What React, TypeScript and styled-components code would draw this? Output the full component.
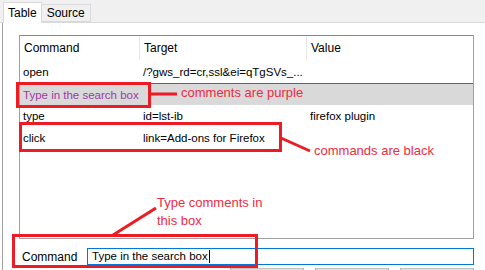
import styled, { createGlobalStyle } from "styled-components"

const GlobalStyle = createGlobalStyle`
  html, body {
    margin: 0;
    padding: 0;
    background: #ffffff;
  }
  body {
    font-family: "Liberation Sans", Arial, sans-serif;
    font-size: 12px;
    color: #000;
  }
`

const Page = styled.div`
  position: relative;
  width: 485px;
  height: 270px;
  overflow: hidden;
  background: #fff;
`

const TabStrip = styled.div`
  height: 23px;
  box-sizing: border-box;
  display: flex;
  align-items: flex-end;
  padding-left: 3px;
  background: #f0f0f0;
  border-bottom: 1px solid #d9d9d9;
`

const Tab = styled.div<{ $active?: boolean }>`
  box-sizing: border-box;
  height: ${p => (p.$active ? 21 : 18)}px;
  margin-bottom: ${p => (p.$active ? -1 : 0)}px;
  padding: 0 ${p => (p.$active ? 4 : 5)}px;
  display: flex;
  align-items: center;
  border: 1px solid #d9d9d9;
  border-bottom: ${p => (p.$active ? "none" : "1px solid #d9d9d9")};
  border-left: ${p => (p.$active ? "1px solid #d9d9d9" : "none")};
  background: ${p => (p.$active ? "#ffffff" : "#f0f0f0")};
  font-size: 12px;
`

const Panel = styled.div`
  margin-left: 2px;
  border-left: 1px solid #a0a0a0;
  padding: 12px 11px 0 16px;
  display: flex;
  flex-direction: column;
`

const Grid = styled.div`
  height: 204px;
  box-sizing: border-box;
  border: 1px solid #a0a0a0;
  border-top-color: #828790;
  font-size: 11.5px;
`

const Row = styled.div<{ $comment?: boolean; $header?: boolean }>`
  display: grid;
  grid-template-columns: 120px 167px 1fr;
  box-sizing: border-box;
  height: ${p => (p.$header ? 25 : 22)}px;
  align-items: center;
  background: ${p => (p.$comment ? "#d9d9d9" : "transparent")};
  border-top: ${p => (p.$comment ? "1px solid #2f8a2f" : "none")};
  color: ${p => (p.$comment ? "#a03aa8" : "#000")};
  font-size: ${p => (p.$header ? 12 : 11.5)}px;
`

const Cell = styled.div<{ $header?: boolean; $last?: boolean; $span?: boolean }>`
  padding-left: ${p => (p.$header ? 4 : 3)}px;
  white-space: nowrap;
  overflow: hidden;
  grid-column: ${p => (p.$span ? "1 / -1" : "auto")};
  height: ${p => (p.$header ? 23 : 16)}px;
  line-height: ${p => (p.$header ? 23 : 16)}px;
  border-right: ${p => (p.$header && !p.$last ? "1px solid #e5e5e5" : "none")};
`

const CommandBar = styled.div`
  margin-top: 9px;
  display: flex;
  align-items: center;
  padding-left: 3px;
`

const BarLabel = styled.div`
  width: 65px;
`

const FakeInput = styled.div`
  flex: 1;
  height: 17px;
  box-sizing: border-box;
  border: 1px solid #0078d7;
  padding-left: 4px;
  display: flex;
  align-items: center;
  line-height: 15px;
  font-size: 11.5px;
`

const Caret = styled.span`
  display: inline-block;
  width: 1px;
  height: 13px;
  background: #000;
  margin-left: 1px;
`

const ButtonRow = styled.div`
  margin-top: 3px;
  display: flex;
  justify-content: flex-end;
  gap: 11px;
`

const PushButton = styled.div`
  width: 74px;
  height: 22px;
  box-sizing: border-box;
  border: 1px solid #adadad;
  border-top-color: #c0c0c0;
  background: #e1e1e1;
`

const Mark = styled.div<{ $x: number; $y: number; $w: number; $h: number }>`
  position: absolute;
  left: ${p => p.$x}px;
  top: ${p => p.$y}px;
  width: ${p => p.$w}px;
  height: ${p => p.$h}px;
  box-sizing: border-box;
  border: 3px solid #ed1c24;
`

const Note = styled.div<{ $x: number; $y: number }>`
  position: absolute;
  left: ${p => p.$x}px;
  top: ${p => p.$y}px;
  font-family: "Liberation Sans", Arial, sans-serif;
  font-size: 13px;
  line-height: 18px;
  color: #ec2a44;
  white-space: nowrap;
`

const Lines = styled.svg`
  position: absolute;
  left: 0;
  top: 0;
  pointer-events: none;
`

const rows = [
  { cmd: "open", target: "/?gws_rd=cr,ssl&ei=qTgSVs_...", value: "" },
  { cmd: "Type in the search box", target: "", value: "", comment: true },
  { cmd: "type", target: "id=lst-ib", value: "firefox plugin" },
  { cmd: "click", target: "link=Add-ons for Firefox", value: "" },
]

export default function App() {
  return (
    <Page>
      <GlobalStyle />
      <TabStrip>
        <Tab $active>Table</Tab>
        <Tab>Source</Tab>
      </TabStrip>
      <Panel>
        <Grid>
          <Row $header>
            <Cell $header>Command</Cell>
            <Cell $header>Target</Cell>
            <Cell $header $last>Value</Cell>
          </Row>
          {rows.map((r, i) =>
            r.comment ? (
              <Row key={i} $comment>
                <Cell $span>{r.cmd}</Cell>
              </Row>
            ) : (
              <Row key={i}>
                <Cell>{r.cmd}</Cell>
                <Cell>{r.target}</Cell>
                <Cell>{r.value}</Cell>
              </Row>
            )
          )}
        </Grid>
        <CommandBar>
          <BarLabel>Command</BarLabel>
          <FakeInput>
            Type in the search box<Caret />
          </FakeInput>
        </CommandBar>
        <ButtonRow>
          <PushButton />
          <PushButton />
          <PushButton />
        </ButtonRow>
      </Panel>

      {/* annotations */}
      <Mark $x={16} $y={82} $w={135} $h={26} />
      <Mark $x={19} $y={122} $w={263} $h={30} />
      <Mark $x={12} $y={234} $w={246} $h={34} />
      <Lines width={485} height={270}>
        <line x1={150} y1={94} x2={177} y2={94} stroke="#ed1c24" strokeWidth={3} />
        <line x1={281} y1={138} x2={310} y2={151} stroke="#ed1c24" strokeWidth={3} />
        <line x1={156} y1={208} x2={113} y2={235} stroke="#ed1c24" strokeWidth={3} />
      </Lines>
      <Note $x={181} $y={84}>comments are purple</Note>
      <Note $x={314} $y={142}>commands are black</Note>
      <Note $x={157} $y={194}>
        Type comments in
        <br />
        this box
      </Note>
    </Page>
  )
}
